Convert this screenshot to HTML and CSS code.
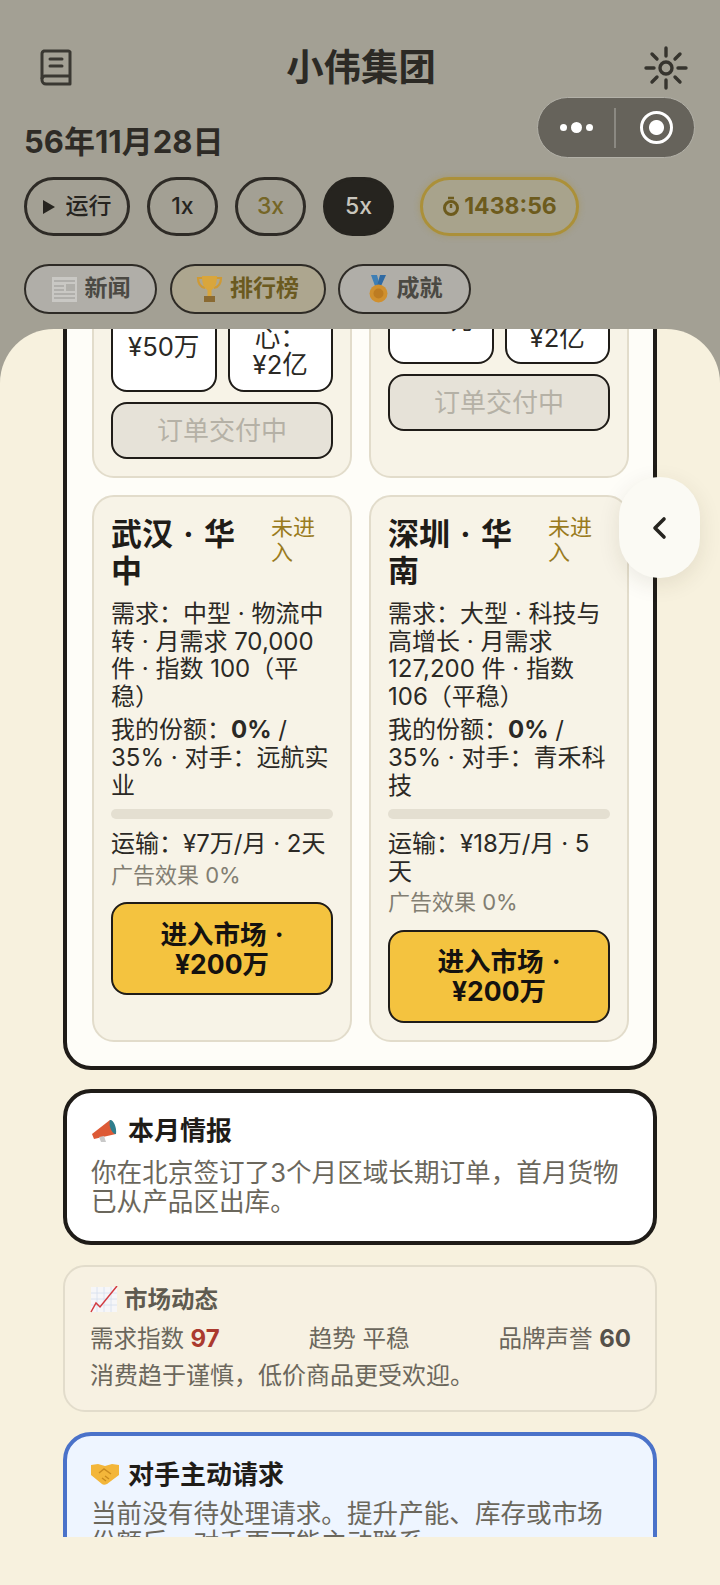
FILE: index.html
```html
<!doctype html>
<html lang="zh-CN">
  <head>
    <meta charset="utf-8">
    <meta name="viewport" content="width=device-width">
    <title>小伟集团</title>
    <link rel="stylesheet" href="styles.css">
  </head>
  <body>
    <div class="page">
      <header class="top">
        <div class="titlebar">
          <svg class="book" width="32" height="37" viewBox="0 0 32 37" fill="none" stroke="#3a3832" stroke-width="3" stroke-linejoin="round">
            <path d="M4 2h24a2 2 0 0 1 2 1v32H6a4 4 0 0 1-4-4V5a3 3 0 0 1 2-3z"/>
            <path d="M2 30a3 3 0 0 1 3-3h25"/>
            <path d="M10 10h12M10 17h12" stroke-linecap="round"/>
          </svg>
          <h1>小伟集团</h1>
          <svg class="sun" width="44" height="44" viewBox="0 0 44 44" fill="none" stroke="#36342e" stroke-width="3.4" stroke-linecap="round">
            <circle cx="22" cy="22" r="6"/>
            <path d="M22 2v8M22 34v8M2 22h8M34 22h8M8 8l5 5M31 31l5 5M36 8l-5 5M13 31l-5 5"/>
          </svg>
        </div>
        <div class="date">56年11月28日</div>
        <div class="controls">
          <div class="pill run"><span class="tri"></span>运行</div>
          <div class="pill speed">1x</div>
          <div class="pill speed olive">3x</div>
          <div class="pill speed active">5x</div>
          <div class="pill timer">
            <svg width="18" height="21" viewBox="0 0 18 21" fill="none" stroke="#6d5b1d" stroke-width="3"><circle cx="9" cy="12" r="6.5"/><path d="M6 2h6M9 8v4" stroke-width="2.4"/></svg>
            1438:56
          </div>
        </div>
        <nav class="tabs">
          <div class="tab news">
            <svg width="27" height="27" viewBox="0 0 27 27"><rect x="1" y="1" width="25" height="25" fill="#c9c8c4"/><path d="M3 5h21M3 10h10M3 14h10M3 18h21M3 22h21" stroke="#a8a7a2" stroke-width="1.5"/><rect x="15" y="8" width="9" height="7" fill="#b0afaa"/></svg>
            新闻
          </div>
          <div class="tab gold">
            <svg width="27" height="28" viewBox="0 0 27 28"><path d="M7 3H2c0 7 3 9 7 10M20 3h5c0 7-3 9-7 10" fill="none" stroke="#cf9a34" stroke-width="2.2"/><path d="M6 1h15c0 8-2 12-5.500 14v6h-4v-6C8 13 6 9 6 1z" fill="#d9a63c"/><rect x="8" y="21" width="11" height="6" fill="#8a6a32"/></svg>
            排行榜
          </div>
          <div class="tab">
            <svg width="23" height="28" viewBox="0 0 23 28"><path d="M4 0h6l3 11H8z" fill="#3f7fb5"/><path d="M19 0h-6l-3 11h4z" fill="#2f6aa3"/><circle cx="11.500" cy="18.500" r="9" fill="#d0902e"/><circle cx="11.500" cy="18.500" r="5" fill="#bd7c22"/></svg>
            成就
          </div>
        </nav>
        <div class="capsule">
          <div class="dots"><i></i><i class="big"></i><i></i></div>
          <div class="split"></div>
          <div class="ring"></div>
        </div>
      </header>

      <main class="sheet">
        <div class="scroller">
          <section class="panel">
            <div class="city-grid">
              <article class="city">
                <div class="city-head"><h3>北京 · 华北</h3><span class="state">已进入</span></div>
                <p class="line">需求：大型 · 月需求 98,000 件 · 指数 97</p>
                <div class="stats"><div class="stat short">¥50万</div><div class="stat">运输中心：<span class="amt">¥2亿</span></div></div>
                <div class="btn off">订单交付中</div>
              </article>
              <article class="city">
                <div class="city-head"><h3>上海 · 华东</h3><span class="state">已进入</span></div>
                <p class="line">需求：大型</p>
                <div class="stats"><div class="stat short">¥50万</div><div class="stat">运输中心：<span class="amt">¥2亿</span></div></div>
                <div class="btn off">订单交付中</div>
              </article>
              <article class="city">
                <div class="city-head"><h3>武汉 · 华中</h3><span class="state">未进入</span></div>
                <p class="line">需求：中型 · 物流中转 · 月需求 70,000 件 · 指数 100（平稳）</p>
                <p class="line share">我的份额：<b>0%</b> / 35% · 对手：远航实业</p>
                <div class="bar"></div>
                <p class="line">运输：¥7万/月 · 2天</p>
                <p class="line muted">广告效果 0%</p>
                <div class="btn go">进入市场 · ¥200万</div>
              </article>
              <article class="city">
                <div class="city-head"><h3>深圳 · 华南</h3><span class="state">未进入</span></div>
                <p class="line">需求：大型 · 科技与高增长 · 月需求 127,200 件 · 指数 106（平稳）</p>
                <p class="line share">我的份额：<b>0%</b> / 35% · 对手：青禾科技</p>
                <div class="bar"></div>
                <p class="line">运输：¥18万/月 · 5天</p>
                <p class="line muted">广告效果 0%</p>
                <div class="btn go">进入市场 · ¥200万</div>
              </article>
            </div>
          </section>

          <section class="note">
            <h4>
              <svg width="28" height="24" viewBox="0 0 28 24"><path d="M1 15L19 1l6 14-22 5z" fill="#dd5a36"/><path d="M19 1c3-1 7 7 6 14-3 1-8-7-6-14z" fill="#2f7d8c"/><path d="M8 18l2 5h5l-2-6z" fill="#c9c9c9"/></svg>
              本月情报
            </h4>
            <p>你在北京签订了3个月区域长期订单，首月货物已从产品区出库。</p>
          </section>

          <section class="market">
            <h4>
              <svg width="28" height="27" viewBox="0 0 28 27"><rect x="1" y="1" width="26" height="25" fill="#f6f6f8"/><path d="M7 1v25M14 1v25M21 1v25M1 7h26M1 13h26M1 19h26" stroke="#d5e0ee" stroke-width=".8"/><path d="M1 26l5-9 4 4L27 0" fill="none" stroke="#d33a3f" stroke-width="1.5"/></svg>
              市场动态
            </h4>
            <div class="market-row">
              <span>需求指数 <b class="red">97</b></span>
              <span>趋势 平稳</span>
              <span>品牌声誉 <b>60</b></span>
            </div>
            <p>消费趋于谨慎，低价商品更受欢迎。</p>
          </section>

          <section class="note blue">
            <h4>
              <svg width="28" height="21" viewBox="0 0 28 21"><path d="M0 1l7-1 7 2 7-2 7 1v10L16 20c-2 1-4 1-5 0L0 11z" fill="#f3b63a"/><path d="M8 9l5-4 7 5M11 14l4 3M14 12l4 3" fill="none" stroke="#c98a1e" stroke-width="1.400"/></svg>
              对手主动请求
            </h4>
            <p>当前没有待处理请求。提升产能、库存或市场份额后，对手更可能主动联系。</p>
          </section>
        </div>
      </main>

      <div class="drawer-tab">
        <svg width="16" height="24" viewBox="0 0 16 24" fill="none" stroke="#26241f" stroke-width="3.6" stroke-linecap="round" stroke-linejoin="round"><path d="M13 3L4 12l9 9"/></svg>
      </div>
    </div>
  </body>
</html>
```

FILE: styles.css
```css
* { box-sizing: border-box; }
html, body { margin: 0; padding: 0; background: #a3a094; }
body { font-family: Inter, "Noto Sans CJK SC", sans-serif; font-size: 24px; line-height: 27.6px; color: #2b2925; }
h1, h3, h4, p { margin: 0; }

.page { position: relative; width: 720px; height: 1585px; overflow: hidden; }

/* header */
.top { position: relative; height: 329px; padding: 46px 24px 0; background: #a3a094; }
.titlebar { display: flex; align-items: center; justify-content: space-between; height: 43px; padding: 0 8px 0 16px; }
.titlebar h1 { font-size: 37.400px; line-height: 43px; font-weight: 700; color: #2c2a25; margin-left: 6px; }
.date { margin-top: 34px; height: 38px; font-size: 31px; line-height: 38px; font-weight: 700; color: #2e2b26; }
.controls { display: flex; align-items: center; gap: 17px; margin-top: 16px; font-size: 23px; color: #26241f; }
.pill { display: flex; align-items: center; justify-content: center; height: 59px; border: 3px solid #2e2b26; border-radius: 30px; font-weight: 500; }
.run { width: 106px; gap: 11px; }
.tri { width: 0; height: 0; border-left: 12px solid #26241f; border-top: 7px solid transparent; border-bottom: 7px solid transparent; }
.speed { width: 71px; }
.olive { color: #756627; }
.active { background: #26241f; border-color: #26241f; color: #c9c6bd; }
.timer { width: 159px; margin-left: 9px; gap: 4px; border-color: #ab9039; background: #a8a38c; box-shadow: 0 0 6px rgba(171, 144, 57, .45); color: #6d5b1d; font-weight: 700; }
.tabs { display: flex; gap: 12.500px; margin-top: 28px; font-size: 23px; }
.tab { display: flex; align-items: center; justify-content: center; gap: 7px; width: 133px; height: 50px; border: 2px solid #2e2b26; border-radius: 25px; background: #b0aea8; font-weight: 700; color: #4b4943; white-space: nowrap; }
.tab.gold { width: 156px; background: #ada68f; color: #6b5a20; }

.capsule { position: absolute; left: 537px; top: 97px; width: 158px; height: 61px; display: flex; align-items: center; border: 1px solid #b3b1a8; border-radius: 31px; background: #66635b; }
.dots { display: flex; align-items: center; justify-content: center; gap: 4px; width: 76px; }
.dots i { width: 7px; height: 7px; border-radius: 50%; background: #fff; }
.dots i.big { width: 11px; height: 11px; }
.split { width: 2px; height: 40px; background: #8b8982; }
.ring { width: 33px; height: 33px; margin-left: 24px; border: 3px solid #fff; border-radius: 50%; background: radial-gradient(circle, #fff 0 7px, transparent 8px); }

/* sheet */
.sheet { height: 1256px; background: #f7f1de; border-radius: 54px 54px 0 0; }
.scroller { height: 1208px; margin: 0 63px; overflow: hidden; }
.panel { margin-top: -242px; padding: 24px 24px 24px 25px; border: 4px solid #1f1c18; border-radius: 28px; background: #fefdf8; }
.city-grid { display: grid; grid-template-columns: 1fr 1fr; gap: 17px; }
.city { padding: 18px 17px 17px; border: 2px solid #e2dccb; border-radius: 22px; background: #f7f3e7; }
.city-head { display: flex; justify-content: space-between; gap: 12px; margin-bottom: 11px; }
.city-head h3 { flex: 1; font-size: 31px; line-height: 37px; font-weight: 700; word-spacing: 3px; color: #1f1c18; }
.state { width: 62px; flex: none; font-size: 22px; line-height: 25px; color: #9a7b1d; }
.line.share { margin-top: 6px; }
.line.muted { margin-top: 4px; font-size: 22px; color: #827e72; }
.bar { height: 10px; margin: 10px 0 11px; border-radius: 5px; background: #e4dfd1; }
.stats { display: grid; grid-template-columns: 1fr 1fr; gap: 11px; margin-top: 8px; }
.stat { display: block; padding: 11px 9px; border: 2px solid #1f1c18; border-radius: 16px; background: #fff; font-size: 25.600px; text-align: center; }
.stat.short { padding-top: 48px; }
.amt { white-space: nowrap; }
.btn { display: flex; align-items: center; justify-content: center; border: 2px solid #1f1c18; border-radius: 16px; text-align: center; }
.btn.off { height: 57px; margin-top: 10px; font-size: 26px; background: #e6e2d8; color: #b5b1a6; }
.btn.go { height: 93px; margin-top: 13px; padding: 0 28px; font-size: 26.500px; line-height: 30px; font-weight: 700; word-spacing: 2px; background: #f4c33f; color: #141210; }

/* notes under the panel */
.note { margin-top: 19px; height: 156px; padding: 22px 28px 0 24px; border: 4px solid #1f1c18; border-radius: 28px; background: #fff; }
.note h4, .market h4 { display: flex; align-items: center; gap: 9px; font-size: 26px; line-height: 32px; font-weight: 700; color: #1f1c18; }
.note p { margin-top: 11px; font-size: 25.600px; line-height: 29.500px; color: #6b675c; }
.note.blue { height: 200px; margin-top: 20px; padding-top: 23px; border-color: #4a72c9; background: #eef5ff; }
.note.blue p { margin-top: 8px; }
.market { margin-top: 20px; height: 147px; padding: 19px 24px 0 25px; border: 2px solid #e2dccb; border-radius: 22px; background: #f7f1e2; color: #6b675c; }
.market h4 { gap: 6px; font-size: 23.500px; line-height: 28px; color: #5f5b50; }
.market-row { display: flex; justify-content: space-between; margin-top: 11px; font-size: 23.500px; }
.market-row b { font-size: 24px; font-weight: 700; color: #55514a; }
.market-row b.red { color: #ab3a2e; }
.market p { margin-top: 9px; }

.drawer-tab { position: absolute; left: 619px; top: 477px; width: 81px; height: 101px; display: flex; align-items: center; justify-content: center; padding-right: 2px; border-radius: 40px; background: #fbfaf4; box-shadow: 0 6px 22px rgba(60, 50, 20, .1); }
```
